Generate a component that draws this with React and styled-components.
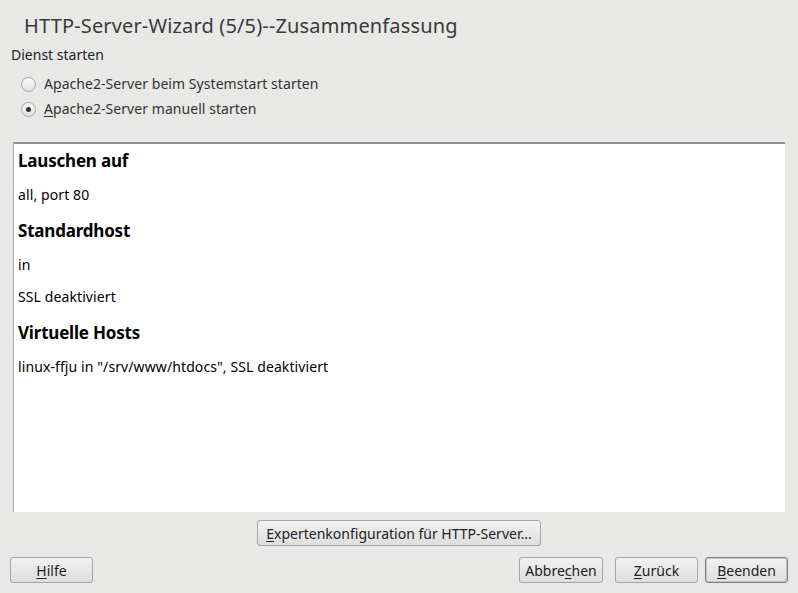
import React from 'react'
import styled, { createGlobalStyle } from 'styled-components'

const Global = createGlobalStyle`
  html, body { margin: 0; padding: 0; }
  body {
    width: 798px;
    height: 593px;
    overflow: hidden;
    background: #e8e8e7;
    font-family: "Noto Sans", "Open Sans", sans-serif;
    color: #1e1e1e;
  }
`

const Window = styled.div`
  width: 798px;
  height: 593px;
  box-sizing: border-box;
  display: flex;
  flex-direction: column;
  background: #e8e8e7;
`

const Title = styled.h1`
  margin: 0;
  padding: 11px 0 0 24px;
  height: 30px;
  font-size: 20px;
  font-weight: normal;
  line-height: 30px;
  letter-spacing: 0.15px;
  color: #3a3a3a;
`

const Group = styled.div`
  padding: 4px 0 0 11px;
  height: 101px;
  box-sizing: border-box;
`

const GroupLabel = styled.div`
  font-size: 14px;
  line-height: 20px;
  color: #222;
`

const RadioList = styled.div`
  display: flex;
  flex-direction: column;
  gap: 5px;
  padding: 9px 0 0 10px;
`

const RadioRow = styled.label`
  display: flex;
  align-items: center;
  gap: 8px;
  font-size: 14px;
  line-height: 20px;
  letter-spacing: 0.05px;
  color: #333;
`

const RadioDot = styled.span`
  width: 15px;
  height: 15px;
  box-sizing: border-box;
  border-radius: 50%;
  border: 1px solid #a6a6a6;
  background: linear-gradient(#f7f7f7, #e2e2e2);
  display: flex;
  align-items: center;
  justify-content: center;
  &::after {
    content: '';
    width: 5px;
    height: 5px;
    border-radius: 50%;
    background: ${p => (p.$on ? '#333' : 'transparent')};
  }
`

const Key = styled.span`
  text-decoration: underline;
  text-underline-offset: 2px;
`

const Summary = styled.div`
  margin: 0 13px;
  height: 370px;
  box-sizing: border-box;
  background: #fff;
  border-top: 2px solid #8f8f8f;
  border-left: 1px solid #a8a8a8;
  padding: 6px 0 0 4px;
  color: #000;
`

const Heading = styled.div`
  font-size: 17px;
  font-weight: bold;
  line-height: 22px;
  letter-spacing: -0.2px;
  margin: 15px 0 13px;
  &:first-child { margin-top: 0; }
`

const Line = styled.div`
  font-size: 14px;
  line-height: 20px;
  letter-spacing: 0.1px;
  margin-bottom: 12px;
`

const Center = styled.div`
  display: flex;
  justify-content: center;
  padding-top: 8px;
`

const Btn = styled.button`
  height: 26px;
  min-width: ${p => p.$w || 84}px;
  padding: 0 4px;
  box-sizing: border-box;
  border: 1px solid ${p => (p.$def ? '#7d7d7d' : '#a5a5a5')};
  border-radius: 3px;
  background: linear-gradient(#f1f1f1, #dedede);
  font-family: "Noto Sans", "Open Sans", sans-serif;
  font-size: 14px;
  color: #222;
  box-shadow: ${p => (p.$def ? 'inset 0 0 0 1px #c4c4c4' : 'none')};
`

const Footer = styled.div`
  display: flex;
  align-items: center;
  padding: 11px 10px 0 10px;
  gap: 12px;
`

const Spacer = styled.div`
  flex: 1;
`

const LastBtn = styled(Btn)`
  margin-left: -5px;
`

export default function App() {
  return (
    <Window>
      <Global />
      <Title>HTTP-Server-Wizard (5/5)--Zusammenfassung</Title>
      <Group>
        <GroupLabel>Dienst starten</GroupLabel>
        <RadioList>
          <RadioRow>
            <RadioDot />
            <span>A<Key>p</Key>ache2-Server beim Systemstart starten</span>
          </RadioRow>
          <RadioRow>
            <RadioDot $on />
            <span><Key>A</Key>pache2-Server manuell starten</span>
          </RadioRow>
        </RadioList>
      </Group>
      <Summary>
        <Heading>Lauschen auf</Heading>
        <Line>all, port 80</Line>
        <Heading>Standardhost</Heading>
        <Line>in</Line>
        <Line>SSL deaktiviert</Line>
        <Heading>Virtuelle Hosts</Heading>
        <Line>linux-ffju in "/srv/www/htdocs", SSL deaktiviert</Line>
      </Summary>
      <Center>
        <Btn $w={284}><Key>E</Key>xpertenkonfiguration für HTTP-Server...</Btn>
      </Center>
      <Footer>
        <Btn $w={83}><Key>H</Key>ilfe</Btn>
        <Spacer />
        <Btn $w={84}>Abbre<Key>c</Key>hen</Btn>
        <Btn $w={83}><Key>Z</Key>urück</Btn>
        <LastBtn $w={83} $def><Key>B</Key>eenden</LastBtn>
      </Footer>
    </Window>
  )
}
